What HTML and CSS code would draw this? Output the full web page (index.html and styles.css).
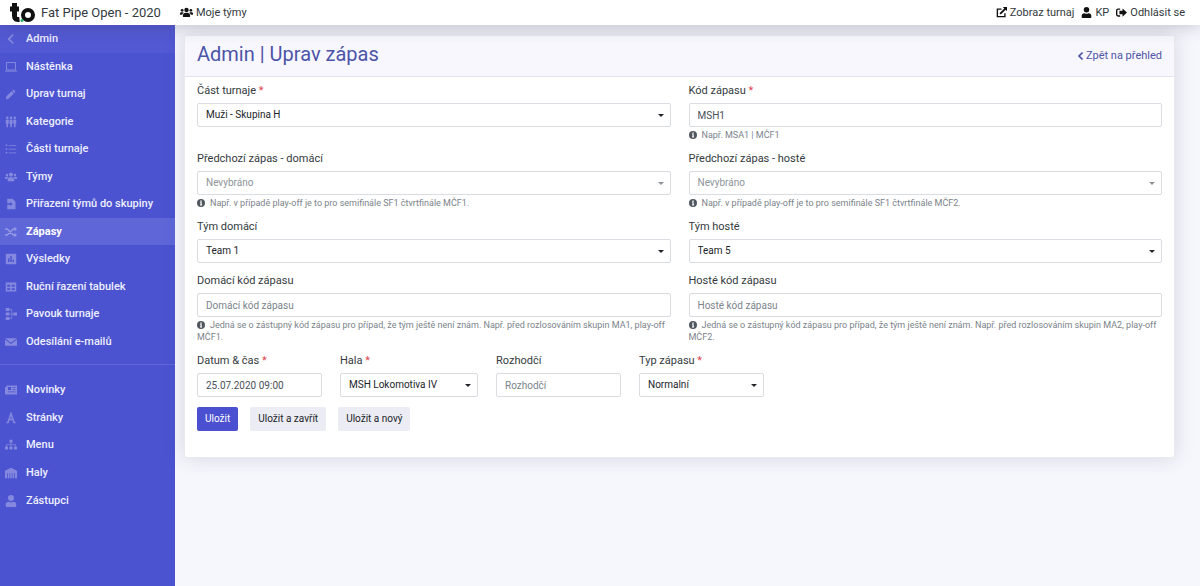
FILE: index.html
```
<!DOCTYPE html>
<html lang="cs">
<head>
<meta charset="utf-8">
<meta name="viewport" content="width=device-width, initial-scale=1">
<title>Admin | Uprav zápas</title>
<link rel="stylesheet" href="styles.css">
</head>
<body>
<svg class="sprite" aria-hidden="true">
  <symbol id="users" viewBox="0 0 20 16"><circle cx="10" cy="4" r="3.4"/><circle cx="3.3" cy="4.6" r="2.1"/><circle cx="16.7" cy="4.6" r="2.1"/><path d="M4.5 14v-2.2A3.8 3.8 0 0 1 8 8.4h4a3.8 3.8 0 0 1 3.5 3.4V14a1 1 0 0 1-1 1h-9a1 1 0 0 1-1-1zM0 10.5v-1A2 2 0 0 1 2 7.5h2.5l1.3.6a6 6 0 0 0-2.4 3.4H1a1 1 0 0 1-1-1zM20 10.5v-1a2 2 0 0 0-2-2h-2.5l-1.3.6a6 6 0 0 1 2.4 3.4H19a1 1 0 0 0 1-1z"/></symbol>
  <symbol id="user" viewBox="0 0 16 16"><circle cx="8" cy="4" r="4"/><path d="M1 15v-2.2A4 4 0 0 1 5 9c2 1 4 1 6 0a4 4 0 0 1 4 3.8V15a1 1 0 0 1-1 1H2a1 1 0 0 1-1-1z"/></symbol>
  <symbol id="external" viewBox="0 0 16 16"><path d="M8 3H2v11h11V9" fill="none" stroke="currentColor" stroke-width="2"/><path d="M10 0h6v6l-2-2-7 7-2-2 7-7z"/></symbol>
  <symbol id="logout" viewBox="0 0 16 16"><path d="M6 3H3a2 2 0 0 0-2 2v6a2 2 0 0 0 2 2h3" fill="none" stroke="currentColor" stroke-width="2"/><path d="M9.500 2 16 8l-6.500 6v-3.500H5v-5h4.500z"/></symbol>
  <symbol id="left" viewBox="0 0 16 16"><path d="M11 2 5 8l6 6" fill="none" stroke="currentColor" stroke-width="2.200"/></symbol>
  <symbol id="left-bold" viewBox="0 0 12 16"><path d="M9.500 2 3.500 8l6 6" fill="none" stroke="currentColor" stroke-width="3"/></symbol>
  <symbol id="monitor" viewBox="0 0 16 16"><path d="M2 2h12v10H2zM0 13.500h16" fill="none" stroke="currentColor" stroke-width="1.300"/></symbol>
  <symbol id="pencil" viewBox="0 0 16 16"><path d="m11 2 3 3-1.500 1.500-3-3zM8.700 4.300l3 3L5 14l-4 1 1-4z"/></symbol>
  <symbol id="people" viewBox="0 0 16 16"><circle cx="3" cy="2.500" r="1.700"/><circle cx="8" cy="2.500" r="1.700"/><circle cx="13" cy="2.500" r="1.700"/><path d="M1 5h4v5H4v5H2v-5H1zM6 5h4v6H9v4H7v-4H6zM11 5h4v5h-1v5h-2v-5h-1z"/></symbol>
  <symbol id="list" viewBox="0 0 16 16"><path d="M1 2h2v2H1zM1 7h2v2H1zM1 12h2v2H1zM5 2.500h10v1H5zM5 7.500h10v1H5zM5 12.500h10v1H5z"/></symbol>
  <symbol id="assign" viewBox="0 0 16 16"><path d="M3 1h7l4 4v10H3V9h4v2l3-3-3-3v2H3z"/></symbol>
  <symbol id="shuffle" viewBox="0 0 16 16"><path d="M0 4h3l8 8h2M0 12h3l8-8h2" fill="none" stroke="currentColor" stroke-width="1.800"/><path d="m12.500 1 3.500 3-3.500 3zM12.500 9l3.500 3-3.500 3z"/></symbol>
  <symbol id="chart" viewBox="0 0 16 16"><path fill-rule="evenodd" d="M2 1h12a1 1 0 0 1 1 1v12a1 1 0 0 1-1 1H2a1 1 0 0 1-1-1V2a1 1 0 0 1 1-1zm2 6v5h2V7zm3-3v8h2V4zm3 5v3h2V9z"/></symbol>
  <symbol id="table" viewBox="0 0 16 16"><path fill-rule="evenodd" d="M1 2h14v12H1zm2 3v2.500h4V5zm6 0v2.500h4V5zM3 9.500V12h4V9.500zm6 0V12h4V9.500z"/></symbol>
  <symbol id="bracket" viewBox="0 0 16 16"><path d="M1 0h5v4H1zM1 6h5v4H1zM1 12h5v4H1zM11 6h5v4h-5z"/><path d="M6 2h3v12H6M6 8h5" fill="none" stroke="currentColor"/></symbol>
  <symbol id="mail" viewBox="0 0 16 16"><path d="M0 3h16L8 9zM0 4.700 8 10.500l8-5.800V13H0z"/></symbol>
  <symbol id="news" viewBox="0 0 16 16"><path fill-rule="evenodd" d="M2 2h14v12H1a1 1 0 0 1-1-1V4h2zm2 2v4h4V4zm6 0v1h4V4zm0 3v1h4V7zm-6 3v1h10v-1z"/></symbol>
  <symbol id="style" viewBox="0 0 16 16"><path d="M2 14h3M11 14h3M4 14 8 2l4 12M5 10h6" fill="none" stroke="currentColor" stroke-width="2"/></symbol>
  <symbol id="sitemap" viewBox="0 0 16 16"><path d="M6 1h4v4H6zM0 10h4v4H0zM6 10h4v4H6zM12 10h4v4h-4z"/><path d="M8 5v5M2 10V7.500h12V10" fill="none" stroke="currentColor"/></symbol>
  <symbol id="hall" viewBox="0 0 16 16"><path fill-rule="evenodd" d="M0 5 8 1l8 4v10H0zm3 3v7h1V8zm3 0v7h1V8zm3 0v7h1V8zm3 0v7h1V8z"/></symbol>
  <symbol id="info" viewBox="0 0 16 16"><path fill-rule="evenodd" d="M8 0a8 8 0 1 1 0 16A8 8 0 0 1 8 0zM6.500 3v2.500h3V3zM6 6.500V8h1v3H6v2h4v-2H9.500V6.500z"/></symbol>
</svg>

<header class="topbar">
  <a class="brand" href="#">
    <svg class="logo" viewBox="0 0 26 22" role="img" aria-label="Logo"><path class="logo-stem" d="M5.500 1v13q0 4 5 3.500M1 7h9"/><circle class="logo-ring" cx="19" cy="13" r="5"/><circle class="logo-dot" cx="13" cy="18.500" r="1.500"/></svg>
    <span>Fat Pipe Open - 2020</span>
  </a>
  <nav class="links"><a href="#"><svg class="icon icon-wide"><use href="#users"/></svg>Moje týmy</a></nav>
  <nav class="links links-right">
    <a href="#"><svg class="icon"><use href="#external"/></svg>Zobraz turnaj</a>
    <a href="#"><svg class="icon"><use href="#user"/></svg>KP</a>
    <a href="#"><svg class="icon"><use href="#logout"/></svg>Odhlásit se</a>
  </nav>
</header>

<div class="shell">
  <aside class="sidebar">
    <nav class="menu menu-main">
      <a class="current-section" href="#"><svg class="icon"><use href="#left"/></svg>Admin</a>
      <a href="#"><svg class="icon"><use href="#monitor"/></svg>Nástěnka</a>
      <a href="#"><svg class="icon"><use href="#pencil"/></svg>Uprav turnaj</a>
      <a href="#"><svg class="icon"><use href="#people"/></svg>Kategorie</a>
      <a href="#"><svg class="icon"><use href="#list"/></svg>Části turnaje</a>
      <a href="#"><svg class="icon"><use href="#users"/></svg>Týmy</a>
      <a href="#"><svg class="icon"><use href="#assign"/></svg>Přiřazení týmů do skupiny</a>
      <a class="active" href="#"><svg class="icon"><use href="#shuffle"/></svg>Zápasy</a>
      <a href="#"><svg class="icon"><use href="#chart"/></svg>Výsledky</a>
      <a href="#"><svg class="icon"><use href="#table"/></svg>Ruční řazení tabulek</a>
      <a href="#"><svg class="icon"><use href="#bracket"/></svg>Pavouk turnaje</a>
      <a href="#"><svg class="icon"><use href="#mail"/></svg>Odesílání e-mailů</a>
    </nav>
    <hr class="divider">
    <nav class="menu menu-site">
      <a href="#"><svg class="icon"><use href="#news"/></svg>Novinky</a>
      <a href="#"><svg class="icon"><use href="#style"/></svg>Stránky</a>
      <a href="#"><svg class="icon"><use href="#sitemap"/></svg>Menu</a>
      <a href="#"><svg class="icon"><use href="#hall"/></svg>Haly</a>
      <a href="#"><svg class="icon"><use href="#user"/></svg>Zástupci</a>
    </nav>
  </aside>

  <main class="content">
    <section class="card">
      <div class="card-header">
        <h1>Admin | Uprav zápas</h1>
        <a class="back" href="#"><svg class="icon"><use href="#left-bold"/></svg>Zpět na přehled</a>
      </div>
      <form class="form">
        <div class="row">
          <div class="field">
            <label for="part">Část turnaje <span class="required">*</span></label>
            <div class="select"><select id="part"><option>Muži - Skupina H</option></select></div>
          </div>
          <div class="field">
            <label for="code">Kód zápasu <span class="required">*</span></label>
            <input id="code" type="text" value="MSH1">
            <p class="help"><svg class="icon"><use href="#info"/></svg>Např. MSA1 | MČF1</p>
          </div>
        </div>
        <div class="row">
          <div class="field">
            <label for="prev-home">Předchozí zápas - domácí</label>
            <div class="select muted"><select id="prev-home"><option>Nevybráno</option></select></div>
            <p class="help"><svg class="icon"><use href="#info"/></svg>Např. v případě play-off je to pro semifinále SF1 čtvrtfinále MČF1.</p>
          </div>
          <div class="field">
            <label for="prev-guest">Předchozí zápas - hosté</label>
            <div class="select muted"><select id="prev-guest"><option>Nevybráno</option></select></div>
            <p class="help"><svg class="icon"><use href="#info"/></svg>Např. v případě play-off je to pro semifinále SF1 čtvrtfinále MČF2.</p>
          </div>
        </div>
        <div class="row">
          <div class="field">
            <label for="team-home">Tým domácí</label>
            <div class="select"><select id="team-home"><option>Team 1</option></select></div>
          </div>
          <div class="field">
            <label for="team-guest">Tým hosté</label>
            <div class="select"><select id="team-guest"><option>Team 5</option></select></div>
          </div>
        </div>
        <div class="row">
          <div class="field">
            <label for="code-home">Domácí kód zápasu</label>
            <input id="code-home" type="text" placeholder="Domácí kód zápasu">
            <p class="help"><svg class="icon"><use href="#info"/></svg>Jedná se o zástupný kód zápasu pro případ, že tým ještě není znám. Např. před rozlosováním skupin MA1, play-off MČF1.</p>
          </div>
          <div class="field">
            <label for="code-guest">Hosté kód zápasu</label>
            <input id="code-guest" type="text" placeholder="Hosté kód zápasu">
            <p class="help"><svg class="icon"><use href="#info"/></svg>Jedná se o zástupný kód zápasu pro případ, že tým ještě není znám. Např. před rozlosováním skupin MA2, play-off MČF2.</p>
          </div>
        </div>
        <div class="row-compact">
          <div class="field">
            <label for="date">Datum &amp; čas <span class="required">*</span></label>
            <input id="date" type="text" value="25.07.2020 09:00">
          </div>
          <div class="field field-wide">
            <label for="hall-select">Hala <span class="required">*</span></label>
            <div class="select"><select id="hall-select"><option>MSH Lokomotiva IV</option></select></div>
          </div>
          <div class="field">
            <label for="referee">Rozhodčí</label>
            <input id="referee" type="text" placeholder="Rozhodčí">
          </div>
          <div class="field">
            <label for="type">Typ zápasu <span class="required">*</span></label>
            <div class="select"><select id="type"><option>Normalní</option></select></div>
          </div>
        </div>
        <div class="actions">
          <button class="button primary" type="button">Uložit</button>
          <button class="button" type="button">Uložit a zavřít</button>
          <button class="button" type="button">Uložit a nový</button>
        </div>
      </form>
    </section>
  </main>
</div>
</body>
</html>
```

FILE: styles.css
```
* { box-sizing: border-box; }
body {
  margin: 0;
  min-height: 100vh;
  display: flex;
  flex-direction: column;
  background: #f6f6fd;
  color: #343a40;
  font: 11px/16px Roboto, "Noto Sans", sans-serif;
}
a { color: inherit; text-decoration: none; }
.sprite { display: none; }
.icon { width: 11px; height: 11px; flex: none; fill: currentColor; }

.topbar {
  position: relative;
  z-index: 1;
  display: flex;
  align-items: center;
  height: 25px;
  padding: 0 15px 0 9px;
  background: #fff;
  box-shadow: 0 0 18px rgba(50, 50, 70, .3);
}
.brand { display: flex; align-items: center; gap: 6px; margin-right: 19px; font-size: 13px; }
.logo { width: 26px; height: 22px; }
.logo-stem { fill: none; stroke: #111; stroke-width: 5; }
.logo-ring { fill: none; stroke: #111; stroke-width: 4; }
.logo-dot { fill: #28b463; }
.links { display: flex; gap: 7px; }
.links a { display: flex; align-items: center; gap: 3px; }
.links .icon { color: #111; }
.links .icon-wide { width: 13px; }
.links-right { margin-left: auto; }

.shell { flex: 1; display: flex; }
.sidebar { flex: none; width: 175px; background: #4b53d0; color: #eeeffc; }
.menu { display: grid; grid-auto-rows: 1fr; }
.menu-main { height: 330px; }
.menu-site { height: 138px; }
.menu a { display: flex; align-items: center; gap: 9px; padding: 1px 6px 0 5px; font-weight: 500; }
.menu .icon { width: 12px; height: 12px; opacity: .35; }
.menu .current-section { background: #5359d3; }
.menu .active { background: #5f66d8; color: #fff; font-weight: 700; }
.divider { margin: 9px 0 11px; border: 0; border-top: 1px solid #6167d8; }

.content { flex: 1; min-width: 0; padding: 10px 25px 40px 9px; }
.card {
  background: #fff;
  border: 1px solid #e9e9f0;
  border-radius: 3px;
  box-shadow: 0 0 20px rgba(50, 50, 70, .16);
}
.card-header {
  display: flex;
  align-items: center;
  justify-content: space-between;
  height: 41px;
  padding: 0 12px 4px;
  background: #f7f7fd;
  border-bottom: 1px solid #e4e4ee;
}
h1 { margin: 0; color: #4c54a8; font-size: 20px; line-height: 24px; font-weight: 400; }
.back { display: flex; align-items: center; gap: 2px; padding-top: 4px; color: #5055a5; }
.back .icon { width: 7px; height: 10px; }

.form { display: grid; gap: 10px; padding: 6px 12px 26px; }
.row { display: grid; grid-template-columns: 1fr 1fr; gap: 18px; }
.row-compact { display: flex; gap: 18px; }
.row-compact .field { flex: 0 1 125px; }
.row-compact .field-wide { flex-basis: 138px; }
label { display: block; margin-bottom: 4px; }
.required { color: #e0454f; }
input, select {
  display: block;
  width: 100%;
  height: 24px;
  margin: 0;
  padding: 0 8px;
  border: 1px solid #d9dce0;
  border-radius: 2px;
  background: #fff;
  color: #495057;
  font: 10px/16px Roboto, "Noto Sans", sans-serif;
}
select { appearance: none; color: #212529; }
input::placeholder { color: #7b838a; opacity: 1; }
.select { position: relative; color: #212529; }
.select::after {
  content: "";
  position: absolute;
  top: 11px;
  right: 7px;
  border: 3px solid transparent;
  border-top-color: currentColor;
  border-bottom: 0;
  pointer-events: none;
}
.muted, .muted select { color: #8e9499; }
.help { margin: 2px 0 0; color: #7b838a; font-size: 9px; line-height: 12px; }
.help .icon { width: 8px; height: 8px; margin-right: 5px; color: #50575e; vertical-align: -1px; }

.actions { display: flex; gap: 12px; }
.button {
  height: 24px;
  padding: 0 8px;
  border: 0;
  border-radius: 2px;
  background: #ececf4;
  color: #212529;
  font: 10px/16px Roboto, "Noto Sans", sans-serif;
}
.button.primary { background: #4b50d1; color: #fff; }
```
